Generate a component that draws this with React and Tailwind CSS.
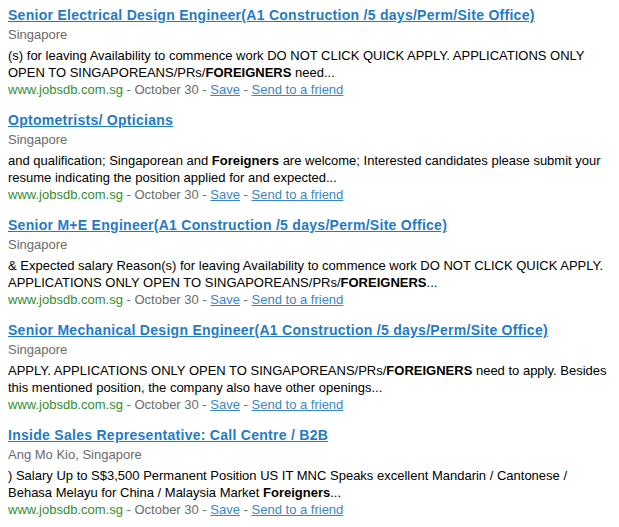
import React from "react";

const items = [
  {
    title: "Senior Electrical Design Engineer(A1 Construction /5 days/Perm/Site Office)",
    loc: "Singapore",
    desc: [
      "(s) for leaving Availability to commence work DO NOT CLICK QUICK APPLY. APPLICATIONS ONLY OPEN TO SINGAPOREANS/PRs/",
      "FOREIGNERS",
      " need...",
    ],
  },
  {
    title: "Optometrists/ Opticians",
    loc: "Singapore",
    desc: [
      "and qualification; Singaporean and ",
      "Foreigners",
      " are welcome; Interested candidates please submit your resume indicating the position applied for and expected...",
    ],
  },
  {
    title: "Senior M+E Engineer(A1 Construction /5 days/Perm/Site Office)",
    loc: "Singapore",
    desc: [
      "& Expected salary Reason(s) for leaving Availability to commence work DO NOT CLICK QUICK APPLY. APPLICATIONS ONLY OPEN TO SINGAPOREANS/PRs/",
      "FOREIGNERS",
      "...",
    ],
  },
  {
    title: "Senior Mechanical Design Engineer(A1 Construction /5 days/Perm/Site Office)",
    loc: "Singapore",
    desc: [
      "APPLY. APPLICATIONS ONLY OPEN TO SINGAPOREANS/PRs/",
      "FOREIGNERS",
      " need to apply. Besides this mentioned position, the company also have other openings...",
    ],
  },
  {
    title: "Inside Sales Representative: Call Centre / B2B",
    loc: "Ang Mo Kio, Singapore",
    desc: [
      ") Salary Up to S$3,500 Permanent Position US IT MNC Speaks excellent Mandarin / Cantonese / Behasa Melayu for China / Malaysia Market ",
      "Foreigners",
      "...",
    ],
  },
];

export default function App() {
  return (
    <div
      className="w-[619px] h-[527px] bg-white pl-2 pr-[6px] pt-[5px]"
      style={{ fontFamily: '"Liberation Sans", Arial, sans-serif' }}
    >
      {items.map((it, i) => (
        <div key={i} className="mb-[11px]">
          <div className="leading-[20px] h-[20px] whitespace-nowrap">
            <a href="#" className="text-[14px] font-bold text-[#1f7bc8] underline tracking-[0.28px]">
              {it.title}
            </a>
          </div>
          <div className="text-[13px] leading-[20px] h-[20px] text-[#6b6b6b]">{it.loc}</div>
          <div className="text-[13px] leading-[17px] text-black mt-[2px]">
            {it.desc[0]}
            <b>{it.desc[1]}</b>
            {it.desc[2]}
          </div>
          <div className="text-[13px] leading-[18px] h-[18px] text-[#6b6b6b] whitespace-nowrap">
            <span className="text-[#2f8f2f]">www.jobsdb.com.sg</span> - October 30 -{" "}
            <a href="#" className="text-[#3a86c8] underline">Save</a> -{" "}
            <a href="#" className="text-[#3a86c8] underline">Send to a friend</a>
          </div>
        </div>
      ))}
    </div>
  );
}
